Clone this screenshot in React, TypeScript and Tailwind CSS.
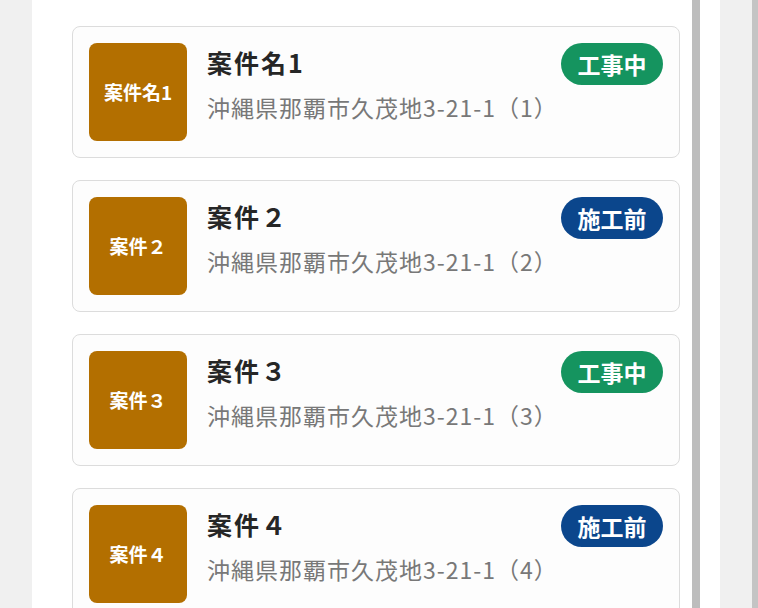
type Status = "工事中" | "施工前";

interface Project {
    id: number;
    name: string;
    address: string;
    status: Status;
}

const projects: Project[] = [
    { id: 1, name: "案件名1", address: "沖縄県那覇市久茂地3-21-1（1）", status: "工事中" },
    { id: 2, name: "案件２", address: "沖縄県那覇市久茂地3-21-1（2）", status: "施工前" },
    { id: 3, name: "案件３", address: "沖縄県那覇市久茂地3-21-1（3）", status: "工事中" },
    { id: 4, name: "案件４", address: "沖縄県那覇市久茂地3-21-1（4）", status: "施工前" },
];

const badgeClass: Record<Status, string> = {
    "工事中": "bg-[#15945f]",
    "施工前": "bg-[#0b468c]",
};

const ProjectCard: React.FC<{ project: Project }> = ({ project }) => (
    <div className="flex items-start h-[132px] rounded-[8px] border border-[#dcdcdc] bg-[#fdfdfd] p-4">
        <div className="flex items-center justify-center w-[98px] h-[98px] shrink-0 rounded-[8px] bg-[#b36f00]">
            <span className="text-[19px] font-bold text-white">{project.name}</span>
        </div>
        <div className="flex-1 ml-5">
            <div className="text-[25px] leading-[38px] tracking-[2px] font-bold text-[#262626]">{project.name}</div>
            <div className="mt-[9px] text-[23px] leading-[34px] tracking-[1px] text-[#787878]">{project.address}</div>
        </div>
        <span
            className={`flex items-center justify-center h-[42px] w-[102px] rounded-full text-[23px] font-bold text-white ${badgeClass[project.status]}`}
        >
            {project.status}
        </span>
    </div>
);

export default function App() {
    return (
        <div
            className="flex h-[608px] w-[758px] overflow-hidden bg-white"
            style={{ fontFamily: '"Noto Sans CJK JP", "Noto Sans", sans-serif' }}
        >
            <div className="w-8 shrink-0 bg-[#f0f0f0]" />
            <div className="w-[660px] shrink-0 pl-10 pr-3 pt-[26px] flex flex-col gap-[22px]">
                {projects.map((p) => (
                    <ProjectCard key={p.id} project={p} />
                ))}
            </div>
            <div className="w-2 shrink-0 bg-[#bdbdbd]" />
            <div className="w-5 shrink-0 bg-white" />
            <div className="w-8 shrink-0 bg-[#f0f0f0]" />
            <div className="flex-1 bg-[#c4c4c4]" />
        </div>
    );
}
